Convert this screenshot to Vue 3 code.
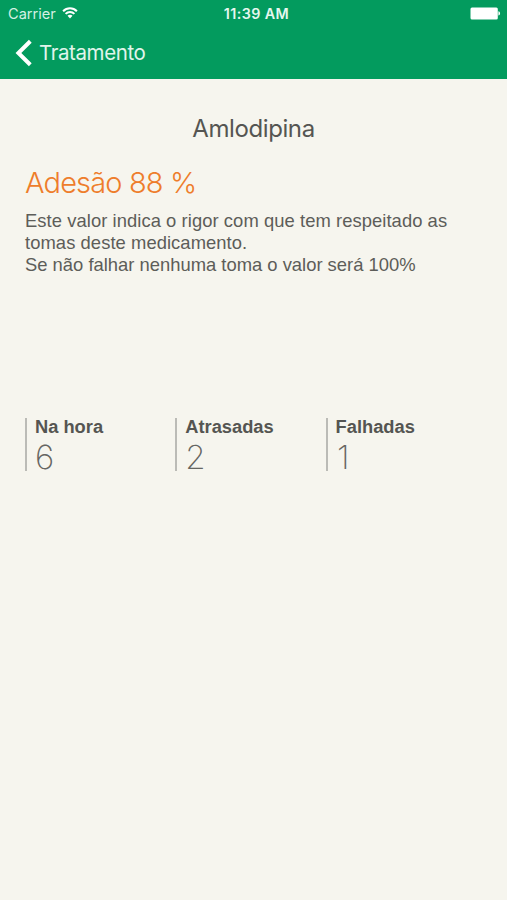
<script setup>
const description = [
  'Este valor indica o rigor com que tem respeitado as',
  'tomas deste medicamento.',
  'Se não falhar nenhuma toma o valor será 100%',
]
const stats = [
  { label: 'Na hora', value: 6 },
  { label: 'Atrasadas', value: 2 },
  { label: 'Falhadas', value: 1 },
]
</script>

<template>
  <div class="screen">
    <header class="header">
      <div class="status">
        <div class="carrier">
          <span>Carrier</span>
          <svg class="wifi" width="16" height="12" viewBox="0 0 16 12" fill="none" stroke="#fff" stroke-width="2">
            <path d="M1.1 4.2C5 .2 11 .2 14.9 4.2" />
            <path d="M3.6 6.9c2.4-2.5 6.4-2.5 8.8 0" />
            <path d="M5.5 8.8c1.3-1.3 3.7-1.3 5 0L8 11.4Z" fill="#fff" stroke="none" />
          </svg>
        </div>
        <span class="clock">11:39 AM</span>
        <svg class="battery" width="31" height="13" viewBox="0 0 31 13" fill="#fff">
          <rect x="0.5" y="0.4" width="27.3" height="12" rx="1.5" />
          <path d="M28.4 4.2c2.2 .6 2.2 3.8 0 4.4Z" />
        </svg>
      </div>
      <nav class="nav">
        <svg class="chevron" width="18" height="28" viewBox="0 0 18 28" fill="none" stroke="#fff" stroke-width="4">
          <path d="M15.3 2.3 3.4 14l11.9 11.7" />
        </svg>
        <span class="back">Tratamento</span>
      </nav>
    </header>
    <main class="content">
      <h1 class="title">Amlodipina</h1>
      <h2 class="adherence">Adesão 88 %</h2>
      <p class="description">
        <span v-for="line in description" :key="line" class="line">{{ line }}</span>
      </p>
      <section class="stats">
        <div v-for="stat in stats" :key="stat.label" class="stat">
          <span class="label">{{ stat.label }}</span>
          <span class="value">{{ stat.value }}</span>
        </div>
      </section>
    </main>
  </div>
</template>

<style>
body {
  background: #f6f5ee;
}
</style>

<style scoped>
.screen {
  height: 900px;
  overflow: hidden;
  background: #f6f5ee;
  color: #555552;
  font-family: Inter, sans-serif;
}
.header {
  height: 79px;
  background: #039b5e;
  color: #fff;
}
.status {
  height: 27px;
  display: grid;
  grid-template-columns: 1fr auto 1fr;
  align-items: center;
  padding: 0 6px 0 8px;
}
.carrier {
  display: flex;
  align-items: center;
  gap: 6px;
  font-size: 14.6px;
  color: #d5f0e3;
}
.wifi {
  margin-bottom: 1px;
}
.clock {
  padding-left: 4px;
  font-size: 14.3px;
  font-weight: 600;
  color: #e6f7ef;
  letter-spacing: 0.4px;
}
.battery {
  justify-self: end;
}
.nav {
  height: 51px;
  display: flex;
  align-items: center;
  padding-left: 15px;
}
.back {
  margin-left: 6px;
  font-size: 20.5px;
  letter-spacing: -0.4px;
  color: #e0f5eb;
}
.content {
  padding: 35px 25px 0;
}
.title {
  margin: 0;
  font-size: 24px;
  font-weight: 400;
  line-height: 30px;
  letter-spacing: -0.4px;
  text-align: center;
}
.adherence {
  margin: 21px 0 0;
  font-size: 29px;
  font-weight: 300;
  line-height: 36px;
  letter-spacing: -0.85px;
  color: #ee7d2b;
}
.description {
  margin: 9.4px 0 0;
  font-family: "Liberation Sans", sans-serif;
  font-size: 18.4px;
  line-height: 21.6px;
  color: #5d5d59;
}
.line {
  display: block;
  white-space: nowrap;
}
.line:not(:last-child) {
  letter-spacing: 0.06px;
}
.stats {
  display: grid;
  grid-template-columns: repeat(3, 150.3px);
  margin-top: 142.6px;
}
.stat {
  height: 53px;
  display: flex;
  flex-direction: column;
  padding-left: 8px;
  border-left: 2px solid #bbbbb6;
}
.label {
  font-family: "Liberation Sans", sans-serif;
  font-size: 18.3px;
  font-weight: 700;
  line-height: 18px;
}
.value {
  font-size: 33px;
  font-weight: 200;
  line-height: 42px;
  color: #666662;
}
.stat:last-child .value {
  padding-left: 1.5px;
}
</style>
